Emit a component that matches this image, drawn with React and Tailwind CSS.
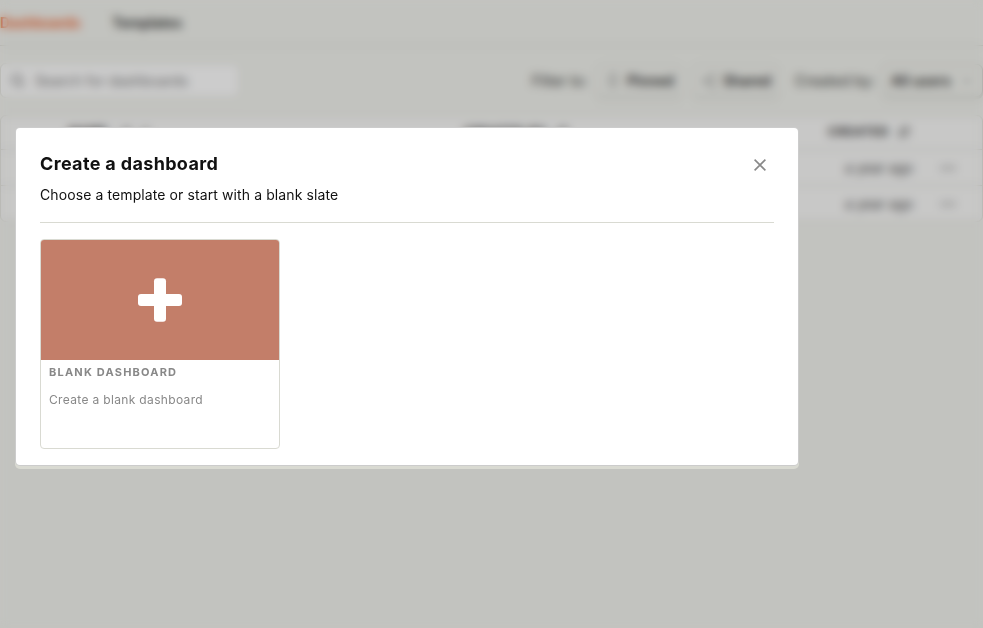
import { Search, Pin, Share2, ChevronDown, ArrowDownUp, Ellipsis } from "lucide-react";

function FilterButton({ icon: Icon, label, className }) {
  return (
    <button className={`flex h-[33px] items-center rounded-[6px] border border-[#dcddd8] bg-[#f3f4ef] text-sm font-semibold shadow-[0_2px_0_#dcddd8] ${className}`}>
      <Icon size={16} strokeWidth={1.5} className="shrink-0 text-[#777]" />
      <span className="ml-[6px]">{label}</span>
    </button>
  );
}

function Row() {
  return (
    <div className="flex h-9 items-center border-t border-[#dadbd2] text-[14px] text-[#4f4f4f]">
      <span className="ml-[844px] w-[94px] tracking-[-.15px]">a year ago</span>
      <Ellipsis size={18} strokeWidth={2} />
    </div>
  );
}

function Dashboards() {
  return (
    <main className="h-[628px] overflow-hidden bg-[#f3f4ef] text-sm text-[#2d2d2d]">
      <nav className="flex h-[46px] items-center gap-8 border-b border-[#dadbd2] font-semibold">
        <span className="w-20 tracking-[-.1px] text-[#f2622a]">Dashboards</span>
        <span>Templates</span>
      </nav>
      <div className="mt-[17px] flex h-[35px] items-center">
        <div className="flex h-[35px] w-[240px] items-center gap-[10px] rounded-[6px] border border-[#dadbd2] bg-white px-[9px] text-[#777]">
          <Search size={15} strokeWidth={2.6} />
          <span className="tracking-[.1px]">Search for dashboards</span>
        </div>
        <span className="ml-[292px] w-[64px] tracking-[.2px]">Filter to:</span>
        <FilterButton icon={Pin} label="Pinned" className="w-[86px] px-[8px]" />
        <FilterButton icon={Share2} label="Shared" className="ml-[10px] w-[87px] px-[8px]" />
        <span className="ml-[16px] w-[87px] tracking-[.35px] whitespace-nowrap">Created by:</span>
        <button className="flex h-[33px] w-[101px] items-center justify-between rounded-[6px] border border-[#cfd0ca] px-[8px] font-semibold tracking-[.15px] shadow-[0_2px_0_#dcddd8]">
          All users
          <ChevronDown size={14} className="text-[#999]" />
        </button>
      </div>
      <section className="mt-[17px] overflow-hidden rounded-[6px] border border-[#dadbd2] bg-[#fafaf9]">
        <div className="flex h-[33px] items-center text-[11.5px] font-bold tracking-[1.1px]">
          <span className="ml-[68px] flex w-[395px] items-center gap-3">NAME <ArrowDownUp size={12} /> <ArrowDownUp size={10} className="-ml-1" /></span>
          <span className="flex w-[364px] items-center gap-2">CREATED BY <ArrowDownUp size={14} /></span>
          <span className="flex items-center gap-2">CREATED <ArrowDownUp size={14} /></span>
        </div>
        <Row />
        <Row />
      </section>
    </main>
  );
}

export default function App() {
  return (
    <div className="h-[628px] overflow-hidden font-['Inter',sans-serif]">
      <Dashboards />
      <div className="fixed inset-0 bg-black/20 px-4 pt-32 backdrop-blur-[5px]">
        <div role="dialog" className="h-[337px] w-[782px] rounded-[4px] bg-white px-6 pt-6 text-[#111] shadow-[0_0_0_1px_#cccccc,0_3px_0_1px_#d9dad2]">
          <header className="flex h-[71px] justify-between border-b border-[#d9dad2]">
            <div>
              <h3 className="text-[18px] leading-6 font-bold tracking-[.34px]">Create a dashboard</h3>
              <p className="mt-2 text-sm leading-[22px] tracking-[.1px]">Choose a template or start with a blank slate</p>
            </div>
            <button aria-label="Close" className="mt-[7px] mr-2 size-3 text-[#888]">
              <svg viewBox="0 0 12 12" className="size-3" fill="none" stroke="currentColor" strokeWidth="1.6">
                <path d="M.6.6l10.8 10.8M11.4.6L.6 11.4" />
              </svg>
            </button>
          </header>
          <div className="mt-4 h-[210px] w-60 overflow-hidden rounded-[4px] border border-[#d9dad2] text-[#888]">
            <div className="flex h-[120px] items-center justify-center bg-[#c37e69]">
              <svg viewBox="0 0 44 44" className="size-11" fill="white">
                <rect y="16" width="44" height="12" rx="3" />
                <rect x="16" y=".2" width="12" height="43.6" rx="3" />
              </svg>
            </div>
            <h5 className="px-2 pt-1 text-[11px] leading-4 font-bold tracking-[1.2px]">BLANK DASHBOARD</h5>
            <p className="px-2 pt-[11px] text-xs leading-[18px] tracking-[.34px]">Create a blank dashboard</p>
          </div>
        </div>
      </div>
    </div>
  );
}
